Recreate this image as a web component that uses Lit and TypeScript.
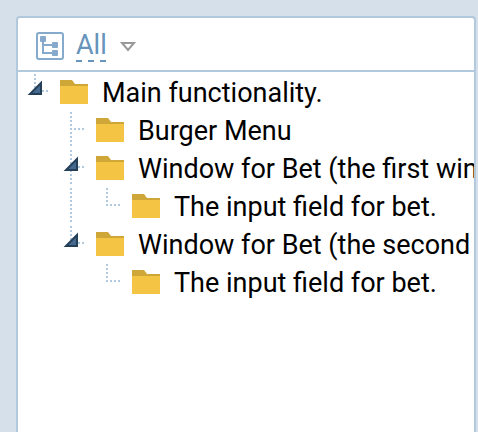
import { LitElement, html, svg, css, nothing } from "lit";
import { customElement, state } from "lit/decorators.js";

interface Row {
  label: string;
  level: number;
  branch?: boolean;
  last?: boolean;
  // levels whose vertical guide passes straight through this row
  through?: number[];
}

const ROWS: Row[] = [
  { label: "Main functionality.", level: 0, branch: true, last: true },
  { label: "Burger Menu", level: 1 },
  { label: "Window for Bet (the first window)", level: 1, branch: true },
  { label: "The input field for bet.", level: 2, last: true, through: [1] },
  { label: "Window for Bet (the second window)", level: 1, branch: true, last: true },
  { label: "The input field for bet.", level: 2, last: true },
];

@customElement("tree-row")
export class TreeRow extends LitElement {
  static properties = { row: { attribute: false } };
  declare row: Row;

  static styles = css`
    :host {
      display: flex;
      height: 38px;
      white-space: nowrap;
    }
    .cell {
      flex: none;
      width: 36px;
      height: 38px;
      padding: 0;
      border: 0;
      background: none;
    }
    button.cell {
      cursor: pointer;
    }
    svg {
      display: block;
    }
    .guide {
      fill: none;
      stroke: #b0c9de;
      stroke-width: 2;
      stroke-dasharray: 2 2;
    }
    .arrow {
      fill: #466a8f;
      stroke: #263f58;
      stroke-width: 2;
    }
    .folder {
      flex: none;
      margin: 6px 14px 0 0;
    }
    .label {
      line-height: 38px;
    }
  `;

  private guides(vertical: number, horizontal: boolean) {
    return svg`
      ${vertical ? svg`<path class="guide" d="M11 0V${vertical}" />` : nothing}
      ${horizontal ? svg`<path class="guide" d="M14 17H24" />` : nothing}`;
  }

  render() {
    const { label, level, branch, last, through = [] } = this.row;
    const indents = Array.from({ length: level }, (_, i) => i);
    const drawing = html`<svg width="36" height="38" viewBox="0 0 36 38" aria-hidden="true">
      ${this.guides(last ? 18 : 36, true)}
      ${branch ? svg`<path class="arrow" d="M17 9V20H6Z" />` : nothing}
    </svg>`;
    return html`
      ${indents.map(
        (i) => html`<span class="cell">
          <svg width="36" height="38" viewBox="0 0 36 38" aria-hidden="true">
            ${through.includes(i) ? this.guides(36, false) : nothing}
          </svg>
        </span>`
      )}
      ${branch
        ? html`<button class="cell" aria-label="Collapse ${label}">${drawing}</button>`
        : html`<span class="cell">${drawing}</span>`}
      <svg class="folder" width="28" height="24" viewBox="0 0 28 24" aria-hidden="true">
        <path fill="#cfa738" d="M0 0H12L15 4H28V6H0Z" />
        <path fill="#f4c444" d="M0 6H28V24H0Z" />
      </svg>
      <span class="label">${label}</span>
    `;
  }
}

@customElement("app-root")
export class AppRoot extends LitElement {
  @state() private rows = ROWS;

  static styles = css`
    :host {
      display: flex;
      box-sizing: border-box;
      min-height: 100vh;
      padding: 16px 2px 0 16px;
      background: #d5e0eb;
      color: #000;
      font: 27px Roboto, "Liberation Sans", sans-serif;
    }
    .panel {
      flex: 1;
      min-width: 0;
      border: 2px solid #b2c8dc;
      border-bottom: 0;
      border-radius: 4px 4px 0 0;
      background: #fff;
    }
    .bar {
      display: flex;
      align-items: center;
      box-sizing: border-box;
      height: 54px;
      padding: 4px 18px 0;
      border-bottom: 2px solid #b2c8dc;
    }
    .bar svg {
      display: block;
    }
    button {
      padding: 0;
      border: 0;
      background: none;
      font: inherit;
      cursor: pointer;
    }
    .filter {
      margin: 0 12px;
      padding-bottom: 2px;
      color: #6694bb;
      line-height: 30px;
      background: repeating-linear-gradient(90deg, #6694bb 0 6px, transparent 6px 12px) 0 100% / 100% 2px no-repeat;
    }
    .tree {
      margin: 0;
      padding: 2px 0 0 6px;
      overflow: hidden;
      list-style: none;
    }
  `;

  render() {
    return html`
      <section class="panel">
        <header class="bar">
          <svg width="28" height="28" viewBox="0 0 28 28" aria-hidden="true">
            <rect x="1" y="1" width="26" height="26" rx="2" fill="none" stroke="#86aacb" stroke-width="2" />
            <path fill="none" stroke="#86aacb" stroke-width="2" d="M7 9V21H17M7 13H17" />
            <g fill="#86aacb">
              <rect x="4" y="4" width="6" height="6" rx="1" />
              <rect x="16" y="10" width="6" height="6" rx="1" />
              <rect x="16" y="18" width="6" height="6" rx="1" />
            </g>
          </svg>
          <button class="filter">All</button>
          <button aria-label="Choose filter">
            <svg width="18" height="12" viewBox="0 0 18 12" aria-hidden="true">
              <path fill="none" stroke="#999" stroke-width="2" d="M3 3H15L9 10Z" />
            </svg>
          </button>
        </header>
        <ul class="tree">
          ${this.rows.map((row) => html`<li><tree-row .row=${row}></tree-row></li>`)}
        </ul>
      </section>
    `;
  }
}
